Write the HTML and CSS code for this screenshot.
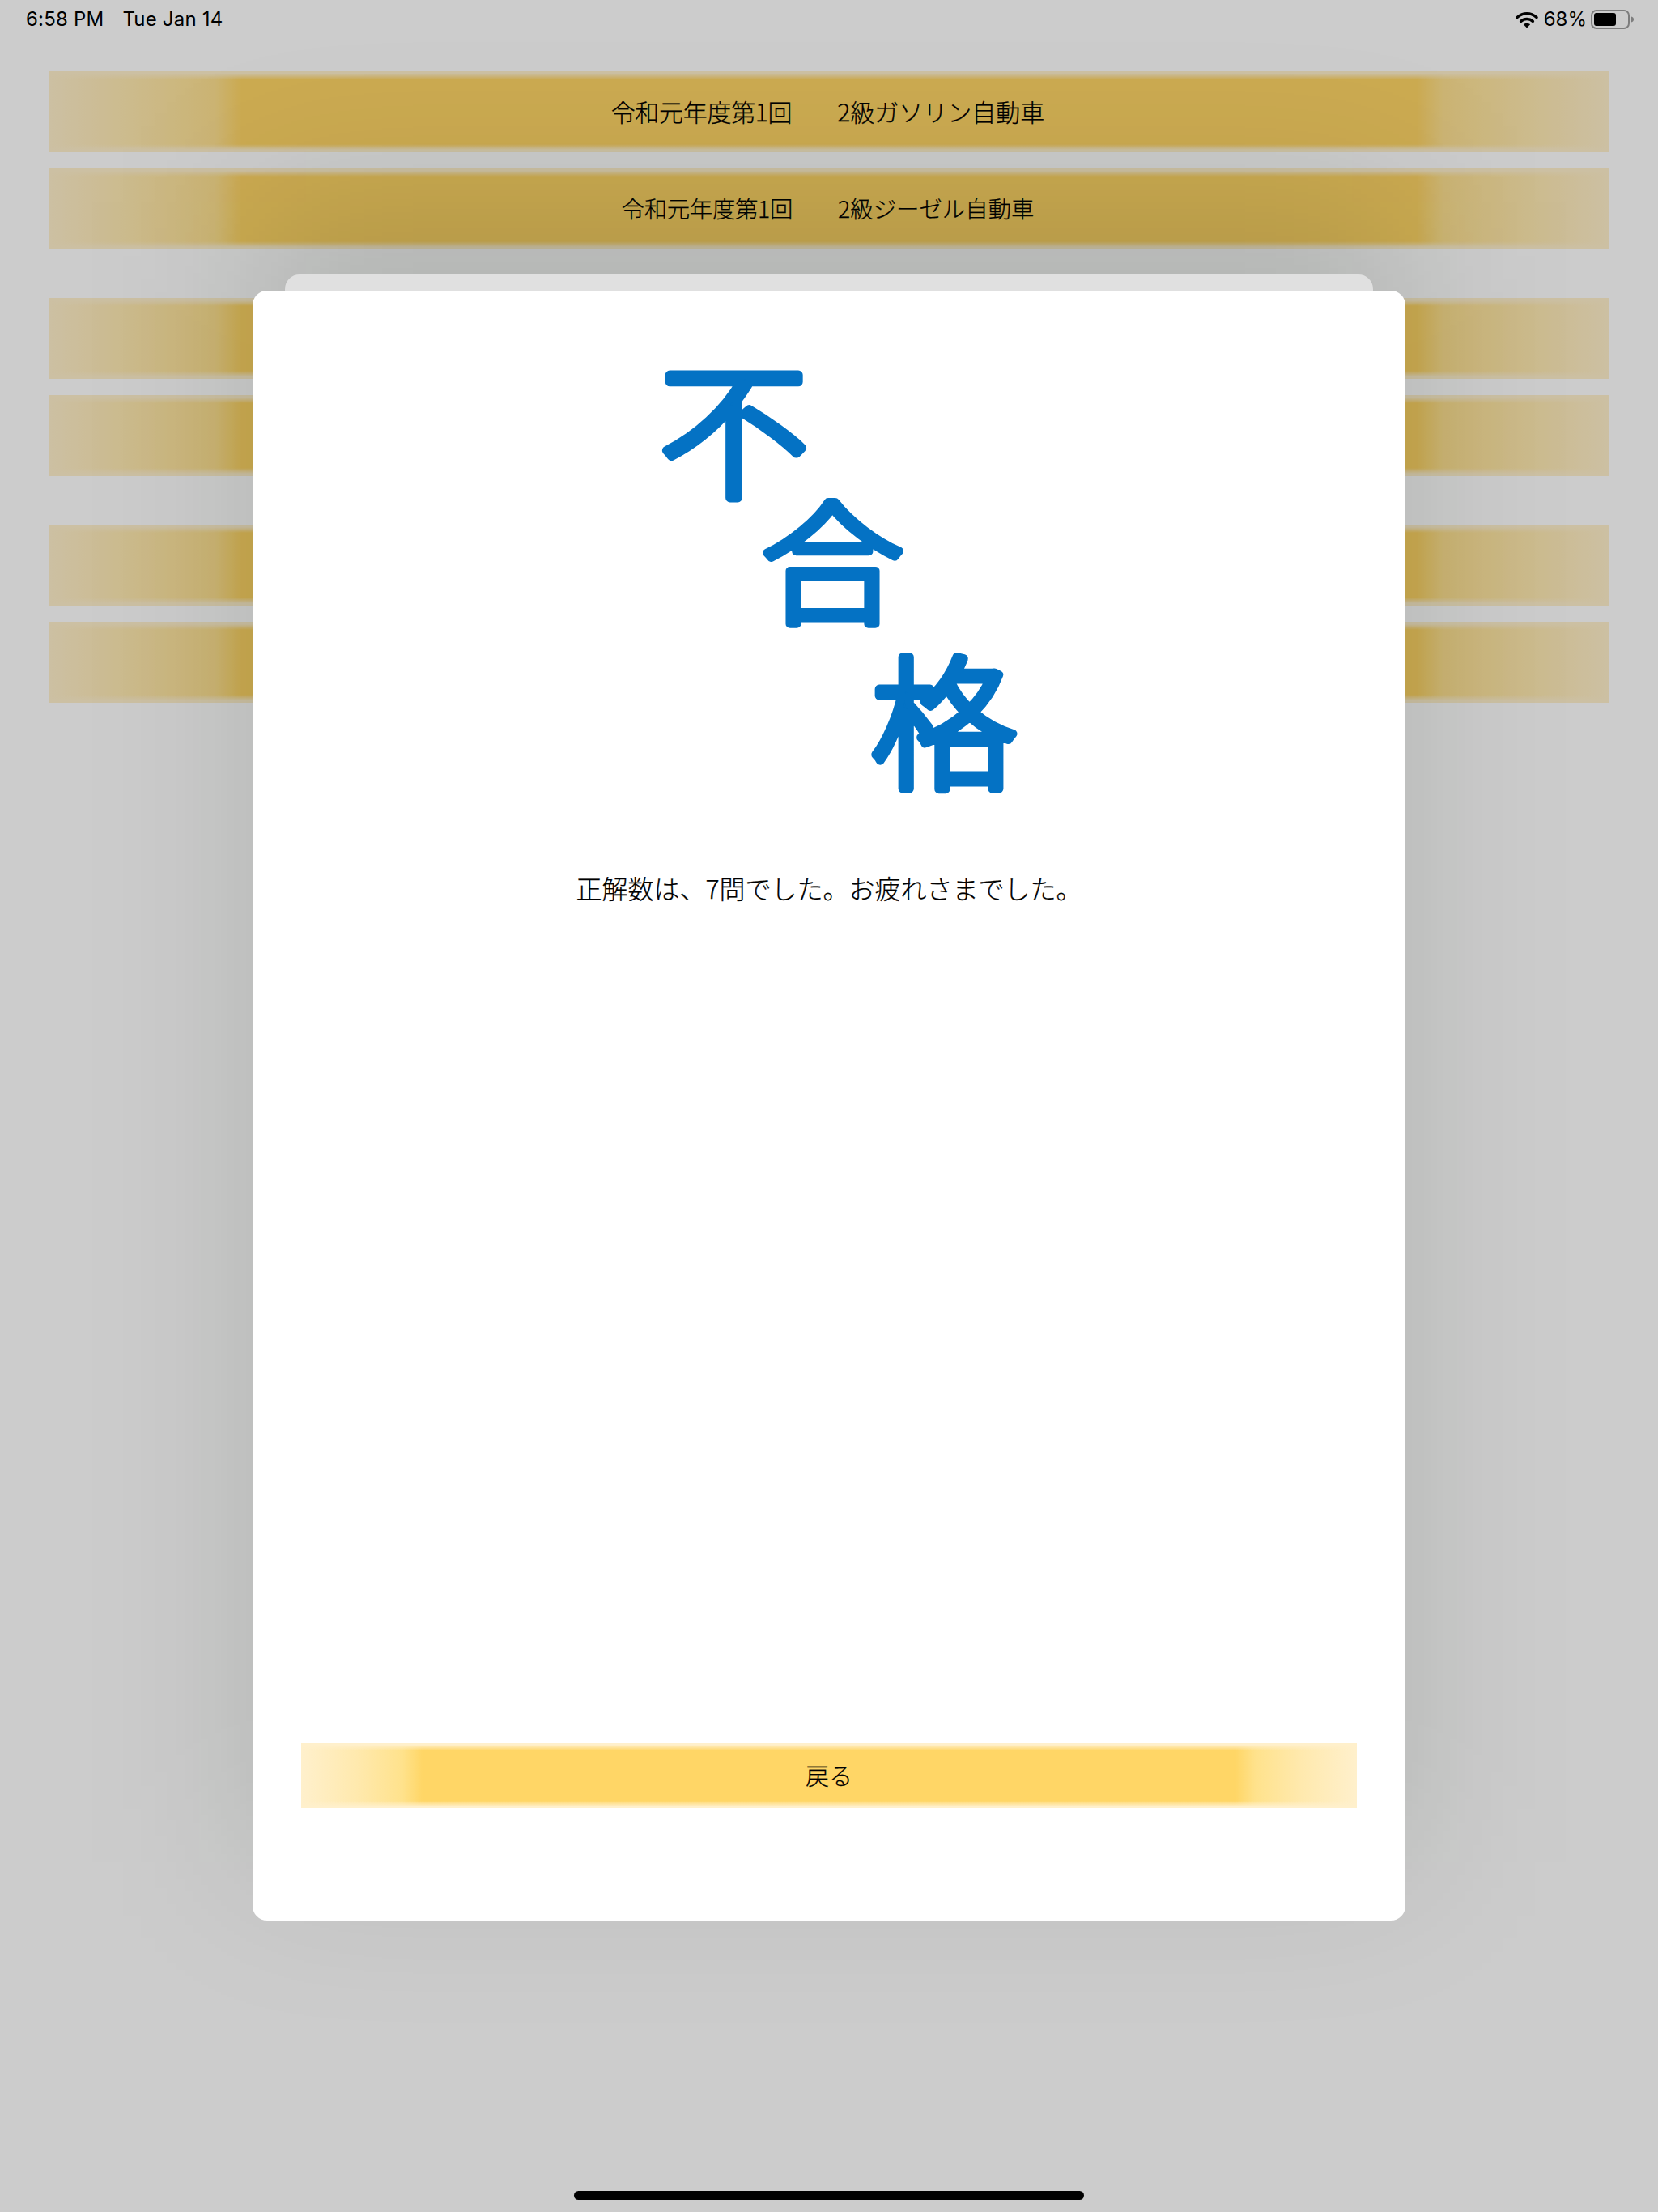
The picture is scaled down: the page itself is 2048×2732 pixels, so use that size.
FILE: index.html
```html
<!DOCTYPE html>
<html lang="ja">
<head>
<meta charset="utf-8">
<title>試験結果</title>
<link rel="stylesheet" href="styles.css">
</head>
<body>
<div class="screen">
  <main class="list">
    <section class="group">
      <div class="row"><span>令和元年度第1回</span><span>2級ガソリン自動車</span></div>
      <div class="row row-small"><span>令和元年度第1回</span><span>2級ジーゼル自動車</span></div>
    </section>
    <section class="group">
      <div class="row"></div>
      <div class="row"></div>
    </section>
    <section class="group">
      <div class="row"></div>
      <div class="row"></div>
    </section>
  </main>
  <div class="scrim"></div>
  <div class="sheet-shadow"></div>
  <div class="sheet-back"></div>
  <div class="sheet">
    <svg class="logo" viewBox="0 0 460 570" width="460" height="570" role="img" aria-label="不合格">
      <text class="logo-char" transform="translate(20 152) scale(1.02 .99)">不</text>
      <text class="logo-char" transform="translate(146 309) scale(.97 .91)">合</text>
      <text class="logo-char" transform="translate(282 512) scale(.99 .98)">格</text>
    </svg>
    <p class="message">正解数は、7問でした。お疲れさまでした。</p>
    <div class="back-button">戻る</div>
  </div>
  <header class="status">
    <div class="status-left"><span>6:58 PM</span><span>Tue Jan 14</span></div>
    <div class="status-right">
      <svg class="wifi" viewBox="0 0 28 21" width="28" height="21">
        <path class="wifi-arc" d="M2 7.6C9.2 1 18.8 1 26 7.6"/>
        <path class="wifi-arc" d="M6.6 12.4C11 8.6 17 8.6 21.4 12.4"/>
        <path class="wifi-dot" d="M14 20.6 9.9 16.2C12.3 14.2 15.7 14.2 18.1 16.2Z"/>
      </svg>
      <span class="pct">68%</span>
      <svg class="battery" viewBox="0 0 54 24" width="54" height="24">
        <rect class="batt-shell" x="1" y="1" width="46" height="22" rx="6"/>
        <rect class="batt-fill" x="4" y="4" width="27" height="16" rx="3"/>
        <path class="batt-nub" d="M50 8.5C52 9 53 10.4 53 12S52 15 50 15.5Z"/>
      </svg>
    </div>
  </header>
  <div class="home-indicator"></div>
</div>
</body>
</html>
```
FILE: styles.css
```css
* { box-sizing: border-box; }
html, body { margin: 0; padding: 0; background: #fff; }
body { font-family: "Noto Sans CJK JP", "Noto Sans", sans-serif; color: #000; }
.screen { position: relative; width: 2048px; height: 2732px; overflow: hidden; background: #fff; }

.list { display: flex; flex-direction: column; gap: 60px; padding: 88px 60px 0; }
.group { display: flex; flex-direction: column; gap: 20px; }
.row {
  height: 100px; display: flex; align-items: center; justify-content: center; gap: 56px;
  padding: 0 3px 3px 0;
  font-size: 30px; font-weight: 300; line-height: 1; -webkit-text-stroke: .25px #000;
  background:
    linear-gradient(to bottom, #fff0cc 0, #fff0cc 3px, rgba(255,240,204,0) 10px),
    linear-gradient(to top, #fff0cc 0, #fff0cc 3px, rgba(255,240,204,0) 10px),
    linear-gradient(90deg, #fff0cc 0, #ffeab0 100px, #ffe291 205px, #ffd666 238px, #ffd666 calc(100% - 238px), #ffe291 calc(100% - 205px), #ffeab0 calc(100% - 100px), #fff0cc 100%);
}
.row span:first-child { letter-spacing: -.3px; }
.row-small { font-size: 28.4px; padding: 0 3px 2px 0; }

.scrim { position: absolute; inset: 0; background: rgba(0,0,0,.2); }
.sheet-shadow {
  position: absolute; left: 312px; top: 250px; width: 1424px; height: 2050px;
  background: rgba(0,16,0,.13); filter: blur(100px);
}
.sheet-back {
  position: absolute; left: 352px; top: 339px; width: 1344px; height: 100px;
  background: #e0e0e0; border-radius: 18px;
}
.sheet {
  position: absolute; left: 312px; top: 359px; width: 1424px; height: 2013px;
  background: #fff; border-radius: 18px;
  display: flex; flex-direction: column; align-items: center;
  padding: 90px 60px 139px;
}
.logo { display: block; flex: none; overflow: visible; filter: blur(.7px); }
.logo-char {
  font-family: "Noto Sans CJK JP", sans-serif; font-size: 182px; font-weight: 300;
  fill: #0472c4; stroke: #0472c4; stroke-width: 11px; stroke-linejoin: round; stroke-linecap: round;
}
.message { margin: 0; padding-top: 53px; font-size: 32px; font-weight: 300; line-height: 48px; text-align: center; flex: 1; -webkit-text-stroke: .25px #000; }
.back-button {
  width: 100%; height: 80px; flex: none; display: flex; align-items: center; justify-content: center;
  padding-bottom: 1px;
  font-size: 29px; font-weight: 300; line-height: 1; -webkit-text-stroke: .25px #000;
  background:
    linear-gradient(to bottom, #fff0cc 0, #fff0cc 2px, rgba(255,240,204,0) 9px),
    linear-gradient(to top, #fff0cc 0, #fff0cc 2px, rgba(255,240,204,0) 9px),
    linear-gradient(90deg, #fff0cc 0, #ffe9ad 70px, #ffe28c 125px, #ffd666 150px, #ffd666 calc(100% - 150px), #ffe28c calc(100% - 125px), #ffe9ad calc(100% - 70px), #fff0cc 100%);
}

.status {
  position: absolute; left: 0; top: 0; width: 100%; height: 48px;
  display: flex; align-items: center; justify-content: space-between; padding: 0 29px 0 32px;
  font-family: Inter, Roboto, sans-serif; font-size: 24px; line-height: 1;
}
.status-left { display: flex; gap: 23px; letter-spacing: .2px; }
.status-right { display: flex; align-items: center; gap: 5px; }
.wifi { margin-right: 2px; }
.wifi-arc { fill: none; stroke: #000; stroke-width: 3.4px; stroke-linecap: round; }
.wifi-dot { fill: #000; }
.batt-shell { fill: none; stroke: #7d7d7d; stroke-width: 2px; }
.batt-fill { fill: #000; }
.batt-nub { fill: #7d7d7d; }

.home-indicator {
  position: absolute; left: 709px; top: 2706px; width: 630px; height: 11px;
  background: #000; border-radius: 6px;
}
```
